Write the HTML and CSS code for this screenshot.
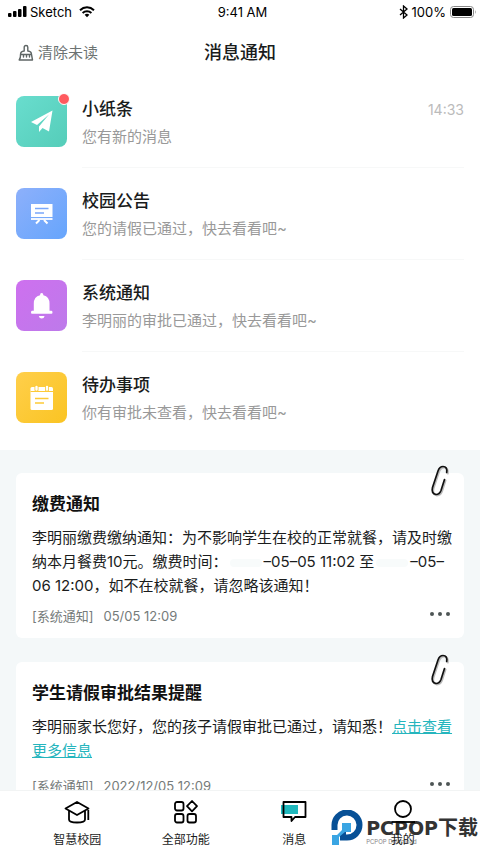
FILE: index.html
```html
<!DOCTYPE html>
<html lang="zh-CN">
<head>
<meta charset="utf-8">
<meta name="viewport" content="width=device-width, initial-scale=1">
<title>消息通知</title>
<link rel="stylesheet" href="styles.css">
</head>
<body>
<div class="status">
  <div class="status-left">
    <svg width="19" height="12" viewBox="0 0 19 12" aria-hidden="true"><rect x="0" y="7" width="3.500" height="4" rx="1"/><rect x="5" y="5" width="3.500" height="6" rx="1"/><rect x="10" y="3" width="3.500" height="8" rx="1"/><rect x="15" y="0" width="3.500" height="11" rx="1"/></svg>
    <span>Sketch</span>
    <svg class="wifi" width="16" height="12" viewBox="0 0 16 12" aria-hidden="true"><path d="M1 4.2C5 .4 11 .4 15 4.2M3.600 6.900C6.100 4.600 9.900 4.600 12.400 6.900" fill="none" stroke="#000" stroke-width="2"/><path d="M5.600 8.800Q8 6.900 10.400 8.800L8 11.200Z"/></svg>
  </div>
  <div class="status-time">9:41 AM</div>
  <div class="status-right">
    <svg width="9" height="14" viewBox="0 0 9 14" aria-hidden="true"><path d="M1 4L8 10L4.500 13V1L8 4L1 10" fill="none" stroke="#000" stroke-width="1.300"/></svg>
    <span>100%</span>
    <svg width="27" height="12" viewBox="0 0 27 12" aria-hidden="true"><rect x=".5" y=".5" width="23" height="11" rx="3" fill="none" stroke="#888"/><rect x="2" y="2" width="20" height="8" rx="1.500"/><path d="M25 4Q26.500 6 25 8Z" fill="#888"/></svg>
  </div>
</div>

<header class="header">
  <button class="clear" type="button">
    <svg width="16" height="18" viewBox="0 0 16 18" fill="none" stroke="#5f6665" stroke-width="1.400" stroke-linejoin="round" stroke-linecap="round" aria-hidden="true"><path d="M6.200 7V3.200Q6.200 1.500 8 1.500T9.800 3.200V7M6.200 7Q2.500 7.400 2.500 10.500M9.800 7Q13.500 7.400 13.500 10.500M2.500 10.500H13.500L14.500 16H1.200Q2.800 13.500 2.500 10.500M5.500 13V11M8.500 13V11M11.500 13V11"/></svg>
    <span>清除未读</span>
  </button>
  <h1>消息通知</h1>
</header>

<main class="content">
  <ul class="list">
    <li><a class="row" href="#note">
      <span class="tile teal">
        <svg viewBox="0 0 51 51" aria-hidden="true"><path d="M36.500 14.500L15 26L21 29L33 18.500L23 30.500V36L26.500 32L33 35.500Z" fill="#fff"/></svg>
        <span class="dot"></span>
      </span>
      <span class="text"><span class="line"><strong>小纸条</strong><time>14:33</time></span><span class="desc">您有新的消息</span></span>
    </a></li>
    <li><a class="row" href="#school">
      <span class="tile blue">
        <svg viewBox="0 0 51 51" aria-hidden="true"><path d="M15 16H36.500V29H15Z" fill="#fff"/><path d="M19 20.500H32.500M19 25H28" stroke="#7aa7fa" stroke-width="1.400"/><path d="M15 31H36.500" stroke="#fff" stroke-width="1.800"/><path d="M23.500 32L20 35.500M28 32L31.500 35.500" stroke="#fff" stroke-width="2"/></svg>
      </span>
      <span class="text"><span class="line"><strong>校园公告</strong></span><span class="desc">您的请假已通过，快去看看吧~</span></span>
    </a></li>
    <li><a class="row" href="#system">
      <span class="tile purple">
        <svg viewBox="0 0 51 51" aria-hidden="true"><path d="M24 15.200Q24 13 25.700 13T27.400 15.200Q33.500 16.800 33.500 23.500V30.800H35.500Q36.500 30.800 36.500 32.300T35.500 33.800H16Q15 33.800 15 32.300T16 30.800H17.800V23.500Q17.800 16.800 24 15.200ZM22.800 36H28.600Q28 38.500 25.700 38.500T22.800 36Z" fill="#fff"/></svg>
      </span>
      <span class="text"><span class="line"><strong>系统通知</strong></span><span class="desc">李明丽的审批已通过，快去看看吧~</span></span>
    </a></li>
    <li><a class="row" href="#todo">
      <span class="tile yellow">
        <svg viewBox="0 0 51 51" aria-hidden="true"><rect x="14.500" y="15" width="22.500" height="23" rx="1.500" fill="#fff"/><path d="M14.500 19.500H37" stroke="#fdca37" stroke-width="1"/><path d="M20.500 14.500V18M31 14.500V18" stroke="#fdca37" stroke-width="4" stroke-linecap="round"/><path d="M20.500 15V17.500M31 15V17.500" stroke="#fff" stroke-width="2.400" stroke-linecap="round"/><path d="M19 26.500H32.500M19 31H28" stroke="#fdca37" stroke-width="1.600"/></svg>
      </span>
      <span class="text"><span class="line"><strong>待办事项</strong></span><span class="desc">你有审批未查看，快去看看吧~</span></span>
    </a></li>
  </ul>

  <section class="cards">
    <article class="card">
      <svg class="clip" width="20" height="32" viewBox="0 0 20 32" fill="none" stroke-linecap="round" aria-hidden="true"><path d="M17.700 8.500Q18.500 2.500 14 2.500Q10.500 2.500 9 7L3.500 23.500Q2 29.500 7 30.500Q10.500 30.500 12 26.500L15.500 15.500" stroke="#bbb" stroke-width="2"/><path d="M16.700 7.500Q17.500 1.500 13 1.500Q9.500 1.500 8 6L2.500 22.500Q1 28.500 6 29.500Q9.500 29.500 11 25.500L14.500 14.500" stroke="#111" stroke-width="1.700"/></svg>
      <h2>缴费通知</h2>
      <p>李明丽缴费缴纳通知：为不影响学生在校的正常就餐，请及时缴纳本月餐费10元。缴费时间：<span class="blank"></span>–05–05 11:02 至<span class="blank"></span>–05–06 12:00，如不在校就餐，请忽略该通知！</p>
      <footer><span>[系统通知]</span><time>05/05 12:09</time><button class="more" type="button" aria-label="更多"><i></i><i></i><i></i></button></footer>
    </article>
    <article class="card roomy">
      <svg class="clip" width="20" height="32" viewBox="0 0 20 32" fill="none" stroke-linecap="round" aria-hidden="true"><path d="M17.700 8.500Q18.500 2.500 14 2.500Q10.500 2.500 9 7L3.500 23.500Q2 29.500 7 30.500Q10.500 30.500 12 26.500L15.500 15.500" stroke="#bbb" stroke-width="2"/><path d="M16.700 7.500Q17.500 1.500 13 1.500Q9.500 1.500 8 6L2.500 22.500Q1 28.500 6 29.500Q9.500 29.500 11 25.500L14.500 14.500" stroke="#111" stroke-width="1.700"/></svg>
      <h2>学生请假审批结果提醒</h2>
      <p>李明丽家长您好，您的孩子请假审批已通过，请知悉！<a href="#more">点击查看更多信息</a></p>
      <footer><span>[系统通知]</span><time>2022/12/05 12:09</time><button class="more" type="button" aria-label="更多"><i></i><i></i><i></i></button></footer>
    </article>
  </section>
</main>

<nav class="tabs">
  <a href="#campus"><svg width="28" height="26" viewBox="0 0 28 26" fill="none" stroke="#000" stroke-width="1.800" stroke-linejoin="round" aria-hidden="true"><path d="M2.500 9.500L14 3L25.500 9.500L14 16ZM6 12V20.500Q6 23.500 14 23.500T22 20.500V12M25.300 11V21"/></svg><span>智慧校园</span></a>
  <a href="#all"><svg width="28" height="26" viewBox="0 0 28 26" fill="none" stroke="#000" stroke-width="1.800" stroke-linejoin="round" aria-hidden="true"><rect x="3" y="3" width="8.500" height="8.500" rx="2"/><path d="M20 2L25 7.200L20 12.400L15 7.200Z"/><rect x="3" y="15" width="8.500" height="8.500" rx="2"/><rect x="15.500" y="15" width="8.500" height="8.500" rx="2"/></svg><span>全部功能</span></a>
  <a href="#message"><svg width="28" height="26" viewBox="0 0 28 26" fill="none" aria-hidden="true"><rect x="1" y="6" width="17" height="9" fill="#1fb8bd"/><path d="M3.500 3H25.500V18H15L11.500 22V18H3.500Z" stroke="#000" stroke-width="1.800" stroke-linejoin="round"/></svg><span>消息</span></a>
  <a href="#mine"><svg width="28" height="26" viewBox="0 0 28 26" fill="none" stroke="#000" stroke-width="1.800" aria-hidden="true"><circle cx="14" cy="10" r="8"/><path d="M2.500 23H26"/></svg><span>我的</span></a>
  <div class="brand">
    <svg width="32" height="36" viewBox="0 0 32 36" aria-hidden="true"><path d="M3.500 20V15.500A12.500 12.500 0 1 1 16 27.500H12V22" fill="none" stroke="#075096" stroke-width="6"/><path d="M11 13H20V22H14L8 27V35H1V25H6L11 20Z" fill="#3aa5e3"/></svg>
    <div class="brand-text"><div class="brand-name"><span>PCPOP</span>下载</div><small>PCPOP Download</small></div>
  </div>
</nav>
</body>
</html>
```

FILE: styles.css
```css
* { box-sizing: border-box; }

body {
  margin: 0;
  height: 100vh;
  display: flex;
  flex-direction: column;
  background: #fff;
  color: #1a1c1c;
  font-family: Inter, "Noto Sans CJK SC", sans-serif;
  font-size: 15px;
}

h1, h2, p, ul { margin: 0; padding: 0; }
a { color: inherit; text-decoration: none; }
svg { display: block; flex: none; }
button { border: 0; padding: 0; background: none; color: inherit; font: inherit; }

.status {
  display: grid;
  grid-template-columns: 1fr auto 1fr;
  align-items: center;
  height: 24px;
  padding: 0 3px 0 8px;
  color: #000;
  font-size: 13px;
}
.status-left, .status-right { display: flex; align-items: center; gap: 4px; }
.status-left { gap: 3px; }
.status-left .wifi { margin-left: 4px; }
.status-right { justify-content: flex-end; }

.header {
  display: grid;
  grid-template-columns: 1fr auto 1fr;
  align-items: center;
  height: 56px;
  padding: 2px 16px 0;
}
.clear { display: flex; align-items: center; gap: 4px; color: #6c7372; padding-left: 2px; line-height: 20px; }
h1 { font-size: 18px; font-weight: 500; line-height: 24px; }

.content { flex: 1; min-height: 0; overflow-y: auto; scrollbar-width: none; background: #f4f8f9; }

.list { list-style: none; padding: 0 16px 2px; background: #fff; }
.row { display: flex; gap: 15px; height: 92px; padding-top: 16px; }
.tile { position: relative; flex: none; width: 51px; height: 51px; border-radius: 8px; }
.teal { background: linear-gradient(135deg, #69ddce, #55cdb9); }
.blue { background: linear-gradient(135deg, #8db0fb, #66a5fc); }
.purple { background: linear-gradient(135deg, #ce70ef, #bd7aea); }
.yellow { background: linear-gradient(135deg, #ffcf4b, #fac423); }
.dot {
  position: absolute;
  top: -3px;
  right: -3px;
  width: 12px;
  height: 12px;
  border: 1px solid #fff;
  border-radius: 50%;
  background: #ff5a5f;
}
.text { flex: 1; display: flex; flex-direction: column; gap: 3px; border-bottom: 1px solid #f7f8f8; margin-bottom: 4px; }
.list li:last-child .text { border-bottom: 0; }
.line { display: flex; justify-content: space-between; align-items: center; height: 26px; }
.line strong { font-size: 17px; font-weight: 500; line-height: 24px; }
.line time { color: #bbb; font-size: 14px; }
.desc { line-height: 24px; color: #999; }

.cards { display: flex; flex-direction: column; gap: 24px; padding: 23px 16px; }
.card { position: relative; padding: 19px 10px 12px 16px; border-radius: 6px; background: #fff; }
.clip { position: absolute; top: -8px; right: 14px; }
.card h2 { margin-bottom: 10px; color: #111; font-size: 17px; font-weight: 600; line-height: 24px; }
.card p { line-height: 24px; }
.card p a { color: #25b5bd; text-decoration: underline; }
.blank { display: inline-block; width: 32px; height: 8px; margin: 0 2px; border-radius: 4px; background: #f8fbfb; }
.card footer { display: flex; align-items: center; gap: 10px; margin-top: 8px; color: #757b7a; font-size: 13px; line-height: 20px; }
.roomy footer { margin-top: 13px; }
.more { display: flex; gap: 4px; margin: 0 4px 4px auto; padding: 4px 0; }
.more i { width: 4px; height: 4px; border-radius: 50%; background: #4d5555; }

.tabs {
  position: relative;
  display: grid;
  grid-template-columns: repeat(4, 1fr);
  height: 63px;
  padding: 8px 23px 0;
  border-top: 1px solid #f2f4f4;
  background: #fff;
  font-size: 12px;
}
.tabs a { z-index: 1; display: flex; flex-direction: column; align-items: center; gap: 5px; line-height: 20px; }

.brand { position: absolute; right: 2px; bottom: 7px; display: flex; align-items: center; gap: 3px; color: #333; }
.brand-text { padding-top: 7px; }
.brand-name { display: flex; align-items: center; font-size: 20px; font-weight: 700; line-height: 20px; }
.brand-name span { font-family: "DejaVu Sans", sans-serif; font-size: 19px; font-weight: 700; }
.brand small { display: block; color: #888; font-size: 6px; line-height: 8px; }
```
